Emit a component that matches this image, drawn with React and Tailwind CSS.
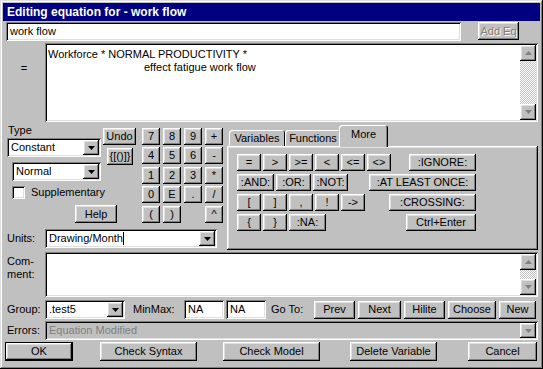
const raised =
  "shadow-[inset_-1px_-1px_#000,inset_1px_1px_#fff,inset_-2px_-2px_#808080,inset_2px_2px_#dfdfdf]";
const sunken =
  "shadow-[inset_1px_1px_#808080,inset_-1px_-1px_#fff,inset_2px_2px_#000,inset_-2px_-2px_#dfdfdf]";
const frame =
  "shadow-[inset_-1px_-1px_#000,inset_1px_1px_#dfdfdf,inset_-2px_-2px_#808080,inset_2px_2px_#fff]";
const defaultBtn =
  "shadow-[inset_0_0_0_1px_#000,inset_-2px_-2px_#000,inset_2px_2px_#fff,inset_-3px_-3px_#808080,inset_3px_3px_#dfdfdf]";
const checker =
  "bg-[repeating-conic-gradient(#fff_0%_25%,#c0c0c0_0%_50%)] bg-[length:2px_2px]";

const Arrow = ({ up = false, color = "#000" }) => (
  <svg width="7" height="4" viewBox="0 0 7 4">
    <polygon points={up ? "0,4 7,4 3.5,0" : "0,0 7,0 3.5,4"} fill={color} />
  </svg>
);

const Btn = ({ className = "", children, disabled = false }) => (
  <div
    className={`flex items-center justify-center bg-[#c0c0c0] whitespace-nowrap ${raised} ${
      disabled ? "text-[#808080] [text-shadow:1px_1px_#fff]" : ""
    } ${className}`}
  >
    {children}
  </div>
);

const Combo = ({ className = "", children, disabled = false }) => (
  <div className={`flex items-stretch p-[2px] ${disabled ? "bg-[#c0c0c0]" : "bg-white"} ${sunken} ${className}`}>
    <div
      className={`flex-1 flex items-center pl-[2px] whitespace-nowrap overflow-hidden ${
        disabled ? "text-[#808080]" : ""
      }`}
    >
      {children}
    </div>
    <div className={`w-[16px] flex items-center justify-center bg-[#c0c0c0] ${raised}`}>
      <Arrow color={disabled ? "#808080" : "#000"} />
    </div>
  </div>
);

const ScrollBar = () => (
  <div className="w-[16px] flex flex-col">
    <div className={`h-[16px] flex items-center justify-center bg-[#c0c0c0] ${raised}`}>
      <Arrow up color="#808080" />
    </div>
    <div className={`flex-1 ${checker}`} />
    <div className={`h-[16px] flex items-center justify-center bg-[#c0c0c0] ${raised}`}>
      <Arrow color="#808080" />
    </div>
  </div>
);

const Field = ({ className = "", children }) => (
  <div className={`flex items-center bg-white pl-[4px] ${sunken} ${className}`}>{children}</div>
);

const keypad = ["7", "8", "9", "+", "4", "5", "6", "-", "1", "2", "3", "*", "0", "E", ".", "/", "(", ")", null, "^"];

const App = () => {
  return (
    <div
      className={`w-[543px] h-[369px] bg-[#c0c0c0] p-[3px] flex flex-col overflow-hidden text-[11px] leading-[13px] text-black font-['Liberation_Sans',Arial,sans-serif] ${frame}`}
    >
      {/* title bar */}
      <div className="h-[18px] shrink-0 bg-[#000080] text-white font-bold text-[12px] leading-[18px] pl-[4px]">
        Editing equation for - work flow
      </div>

      {/* variable name */}
      <div className="flex mt-[1px] h-[19px] shrink-0">
        <Field className="ml-[3px] w-[455px]">work flow</Field>
        <Btn disabled className="ml-[17px] w-[41px] h-[18px]">
          Add Eq
        </Btn>
      </div>

      {/* equation */}
      <div className="flex mt-[2px] h-[79px] shrink-0">
        <div className="w-[42px] text-center pt-[19px]">=</div>
        <div className={`w-[493px] flex bg-white p-[2px] ${sunken}`}>
          <div className="flex-1 pl-[1px] pt-[3px]">
            <div>Workforce * NORMAL PRODUCTIVITY *</div>
            <div className="pl-[96px]">effect fatigue work flow</div>
          </div>
          <ScrollBar />
        </div>
      </div>

      {/* middle */}
      <div className="flex mt-[2px] h-[126px] shrink-0">
        <div className="w-[222px] flex flex-col">
          <div className="flex">
            <div className="w-[139px] flex flex-col">
              <div className="flex">
                <div className="w-[98px] flex flex-col">
                  <div className="h-[14px] pl-[5px] leading-[13px]">Type</div>
                  <Combo className="ml-[4px] w-[94px] h-[19px]">Constant</Combo>
                  <Combo className="ml-[9px] mt-[5px] w-[89px] h-[19px]">Normal</Combo>
                </div>
                <div className="flex flex-col ml-[2px] pt-[4px]">
                  <Btn className="w-[33px] h-[17px]">Undo</Btn>
                  <Btn className="ml-[4px] mt-[3px] w-[26px] h-[17px]">{"{[()]}"}</Btn>
                </div>
              </div>
              <div className="flex items-center mt-[5px] ml-[9px]">
                <div className={`w-[13px] h-[13px] bg-white ${sunken}`} />
                <span className="ml-[6px]">Supplementary</span>
              </div>
              <Btn className="ml-[72px] mt-[6px] w-[42px] h-[18px]">Help</Btn>
            </div>
            <div className="grid grid-cols-[18px_18px_18px_18px] gap-x-[3px] gap-y-[2px] mt-[4px]">
              {keypad.map((k, i) =>
                k === null ? (
                  <div key={i} />
                ) : (
                  <Btn key={i} className="h-[17px]">
                    {k}
                  </Btn>
                )
              )}
            </div>
          </div>
          <div className="flex items-center mt-[6px] h-[19px]">
            <div className="w-[42px] pl-[4px]">Units:</div>
            <Combo className="w-[172px] h-[19px]">
              Drawing/Month
              <span className="w-[1px] h-[13px] bg-black" />
            </Combo>
          </div>
        </div>

        {/* tabs */}
        <div className="ml-[2px] w-[311px] flex flex-col">
          <div className="h-[22px] flex items-end pl-[2px]">
            <div className="w-[56px] h-[16px] rounded-t-[3px] flex items-center justify-center shadow-[inset_1px_1px_#fff,inset_-1px_0_#000]">
              Variables
            </div>
            <div className="w-[56px] h-[16px] rounded-t-[3px] flex items-center justify-center shadow-[inset_1px_1px_#fff,inset_-1px_0_#000,inset_-2px_0_#808080]">
              Functions
            </div>
            <div className="relative z-10 -ml-[2px] mb-[-1px] w-[49px] h-[22px] rounded-t-[3px] bg-[#c0c0c0] flex justify-center pt-[3px] shadow-[inset_1px_1px_#fff,inset_-1px_0_#000,inset_-2px_0_#808080]">
              More
            </div>
          </div>
          <div className={`h-[104px] flex flex-col gap-[3px] pt-[8px] pl-[10px] pr-[62px] ${raised}`}>
            <div className="flex h-[17px]">
              <div className="flex gap-[2px]">
                {["=", ">", ">=", "<", "<=", "<>"].map((k) => (
                  <Btn key={k} className="w-[24px] h-[17px]">
                    {k}
                  </Btn>
                ))}
              </div>
              <Btn className="ml-auto w-[67px] h-[17px]">:IGNORE:</Btn>
            </div>
            <div className="flex h-[17px]">
              <div className="flex gap-[2px]">
                <Btn className="w-[37px] h-[17px]">:AND:</Btn>
                <Btn className="w-[35px] h-[17px]">:OR:</Btn>
                <Btn className="w-[35px] h-[17px]">:NOT:</Btn>
              </div>
              <Btn className="ml-auto w-[107px] h-[17px]">:AT LEAST ONCE:</Btn>
            </div>
            <div className="flex h-[17px]">
              <div className="flex gap-[2px]">
                {["[", "]", ",", "!", "->"].map((k) => (
                  <Btn key={k} className="w-[24px] h-[17px]">
                    {k}
                  </Btn>
                ))}
              </div>
              <Btn className="ml-auto w-[87px] h-[17px]">:CROSSING:</Btn>
            </div>
            <div className="flex h-[17px]">
              <div className="flex gap-[2px]">
                <Btn className="w-[24px] h-[17px]">{"{"}</Btn>
                <Btn className="w-[24px] h-[17px]">{"}"}</Btn>
                <Btn className="w-[37px] h-[17px]">:NA:</Btn>
              </div>
              <Btn className="ml-auto w-[70px] h-[17px]">Ctrl+Enter</Btn>
            </div>
          </div>
        </div>
      </div>

      {/* comment */}
      <div className="flex mt-[2px] h-[45px] shrink-0">
        <div className="w-[42px] pl-[4px] pt-[3px]">
          <div>Com-</div>
          <div>ment:</div>
        </div>
        <div className={`w-[493px] flex bg-white p-[2px] ${sunken}`}>
          <div className="flex-1" />
          <ScrollBar />
        </div>
      </div>

      {/* group / minmax / goto */}
      <div className="flex items-center mt-[3px] h-[19px] shrink-0">
        <div className="w-[42px] pl-[4px]">Group:</div>
        <Combo className="w-[80px] h-[19px]">.test5</Combo>
        <div className="ml-[8px] w-[51px]">MinMax:</div>
        <Field className="w-[40px] h-[19px]">NA</Field>
        <Field className="ml-[2px] w-[40px] h-[19px]">NA</Field>
        <div className="ml-[5px] w-[43px]">Go To:</div>
        <Btn className="w-[41px] h-[18px]">Prev</Btn>
        <Btn className="ml-[3px] w-[43px] h-[18px]">Next</Btn>
        <Btn className="ml-[3px] w-[41px] h-[18px]">Hilite</Btn>
        <Btn className="ml-[3px] w-[48px] h-[18px]">Choose</Btn>
        <Btn className="ml-[3px] w-[37px] h-[18px]">New</Btn>
      </div>

      {/* errors */}
      <div className="flex items-center mt-[2px] h-[19px] shrink-0">
        <div className="w-[42px] pl-[4px]">Errors:</div>
        <Combo disabled className="w-[493px] h-[19px]">
          Equation Modified
        </Combo>
      </div>

      {/* buttons */}
      <div className="flex mt-[2px] h-[19px] shrink-0">
        <div
          className={`ml-[2px] w-[68px] h-[19px] flex items-center justify-center bg-[#c0c0c0] ${defaultBtn}`}
        >
          OK
        </div>
        <Btn className="ml-[27px] w-[97px] h-[19px]">Check Syntax</Btn>
        <Btn className="ml-[26px] w-[97px] h-[19px]">Check Model</Btn>
        <Btn className="ml-[30px] w-[87px] h-[19px]">Delete Variable</Btn>
        <Btn className="ml-[31px] w-[69px] h-[19px]">Cancel</Btn>
      </div>
    </div>
  );
};

export default App;
